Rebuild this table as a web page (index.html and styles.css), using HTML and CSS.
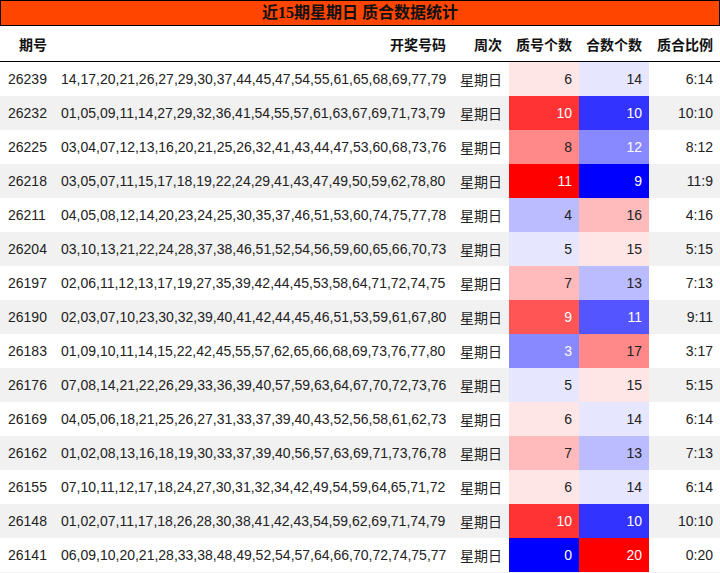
FILE: index.html
```html
<!DOCTYPE html>
<html lang="zh">
<head>
<meta charset="utf-8">
<title>近15期星期日 质合数据统计</title>
<link rel="stylesheet" href="styles.css">
</head>
<body>
<div class="board">
  <div class="title">近15期星期日 质合数据统计</div>
  <div class="row head">
    <div class="c id r">期号</div>
    <div class="c nums r">开奖号码</div>
    <div class="c r">周次</div>
    <div class="c r">质号个数</div>
    <div class="c r">合数个数</div>
    <div class="c r">质合比例</div>
  </div>
  <div class="row">
    <div class="c id">26239</div><div class="c nums">14,17,20,21,26,27,29,30,37,44,45,47,54,55,61,65,68,69,77,79</div><div class="c">星期日</div>
    <div class="c r red1">6</div><div class="c r blue1">14</div><div class="c r">6:14</div>
  </div>
  <div class="row alt">
    <div class="c id">26232</div><div class="c nums">01,05,09,11,14,27,29,32,36,41,54,55,57,61,63,67,69,71,73,79</div><div class="c">星期日</div>
    <div class="c r red5">10</div><div class="c r blue5">10</div><div class="c r">10:10</div>
  </div>
  <div class="row">
    <div class="c id">26225</div><div class="c nums">03,04,07,12,13,16,20,21,25,26,32,41,43,44,47,53,60,68,73,76</div><div class="c">星期日</div>
    <div class="c r red3">8</div><div class="c r blue3">12</div><div class="c r">8:12</div>
  </div>
  <div class="row alt">
    <div class="c id">26218</div><div class="c nums">03,05,07,11,15,17,18,19,22,24,29,41,43,47,49,50,59,62,78,80</div><div class="c">星期日</div>
    <div class="c r red6">11</div><div class="c r blue6">9</div><div class="c r">11:9</div>
  </div>
  <div class="row">
    <div class="c id">26211</div><div class="c nums">04,05,08,12,14,20,23,24,25,30,35,37,46,51,53,60,74,75,77,78</div><div class="c">星期日</div>
    <div class="c r blue2">4</div><div class="c r red2">16</div><div class="c r">4:16</div>
  </div>
  <div class="row alt">
    <div class="c id">26204</div><div class="c nums">03,10,13,21,22,24,28,37,38,46,51,52,54,56,59,60,65,66,70,73</div><div class="c">星期日</div>
    <div class="c r blue1">5</div><div class="c r red1">15</div><div class="c r">5:15</div>
  </div>
  <div class="row">
    <div class="c id">26197</div><div class="c nums">02,06,11,12,13,17,19,27,35,39,42,44,45,53,58,64,71,72,74,75</div><div class="c">星期日</div>
    <div class="c r red2">7</div><div class="c r blue2">13</div><div class="c r">7:13</div>
  </div>
  <div class="row alt">
    <div class="c id">26190</div><div class="c nums">02,03,07,10,23,30,32,39,40,41,42,44,45,46,51,53,59,61,67,80</div><div class="c">星期日</div>
    <div class="c r red4">9</div><div class="c r blue4">11</div><div class="c r">9:11</div>
  </div>
  <div class="row">
    <div class="c id">26183</div><div class="c nums">01,09,10,11,14,15,22,42,45,55,57,62,65,66,68,69,73,76,77,80</div><div class="c">星期日</div>
    <div class="c r blue3">3</div><div class="c r red3">17</div><div class="c r">3:17</div>
  </div>
  <div class="row alt">
    <div class="c id">26176</div><div class="c nums">07,08,14,21,22,26,29,33,36,39,40,57,59,63,64,67,70,72,73,76</div><div class="c">星期日</div>
    <div class="c r blue1">5</div><div class="c r red1">15</div><div class="c r">5:15</div>
  </div>
  <div class="row">
    <div class="c id">26169</div><div class="c nums">04,05,06,18,21,25,26,27,31,33,37,39,40,43,52,56,58,61,62,73</div><div class="c">星期日</div>
    <div class="c r red1">6</div><div class="c r blue1">14</div><div class="c r">6:14</div>
  </div>
  <div class="row alt">
    <div class="c id">26162</div><div class="c nums">01,02,08,13,16,18,19,30,33,37,39,40,56,57,63,69,71,73,76,78</div><div class="c">星期日</div>
    <div class="c r red2">7</div><div class="c r blue2">13</div><div class="c r">7:13</div>
  </div>
  <div class="row">
    <div class="c id">26155</div><div class="c nums">07,10,11,12,17,18,24,27,30,31,32,34,42,49,54,59,64,65,71,72</div><div class="c">星期日</div>
    <div class="c r red1">6</div><div class="c r blue1">14</div><div class="c r">6:14</div>
  </div>
  <div class="row alt">
    <div class="c id">26148</div><div class="c nums">01,02,07,11,17,18,26,28,30,38,41,42,43,54,59,62,69,71,74,79</div><div class="c">星期日</div>
    <div class="c r red5">10</div><div class="c r blue5">10</div><div class="c r">10:10</div>
  </div>
  <div class="row last">
    <div class="c id">26141</div><div class="c nums">06,09,10,20,21,28,33,38,48,49,52,54,57,64,66,70,72,74,75,77</div><div class="c">星期日</div>
    <div class="c r blue6">0</div><div class="c r red6">20</div><div class="c r">0:20</div>
  </div>
</div>
</body>
</html>
```

FILE: styles.css
```css
html, body {
  margin: 0;
  padding: 0;
  background: #ffffff;
}

.board {
  width: 720px;
  font-family: "Liberation Sans", "Noto Sans CJK SC", sans-serif;
  font-size: 14px;
  color: #222222;
}

.title {
  height: 24px;
  line-height: 24px;
  border: 1px solid #000000;
  background: #ff4500;
  color: #111111;
  text-align: center;
  font-family: "Liberation Serif", "Noto Sans CJK SC", serif;
  font-weight: bold;
  font-size: 16px;
}

.row {
  display: grid;
  grid-template-columns: 55px 398px 56px 70px 70px 71px;
  height: 34px;
  background: #ffffff;
}

.row.alt {
  background: #f1f1f1;
}

.row.last {
  border-bottom: 1px solid #f1f1f1;
}

.row.head {
  height: 35px;
  border-bottom: 1px solid #000000;
  font-weight: bold;
  color: #111111;
}

.c {
  display: flex;
  align-items: center;
  padding: 0 7px;
  white-space: nowrap;
  overflow: hidden;
}

.c.id {
  padding: 0 8px;
}

.c.nums {
  padding: 0 7px 0 6px;
}

.c.r {
  justify-content: flex-end;
}

.red1 { background: #ffe6e6; }
.red2 { background: #ffbbbb; }
.red3 { background: #ff8888; }
.red4 { background: #ff5555; color: #ffffff; }
.red5 { background: #ff3333; color: #ffffff; }
.red6 { background: #ff0000; color: #ffffff; }

.blue1 { background: #e6e6ff; }
.blue2 { background: #bbbbff; }
.blue3 { background: #8888ff; color: #ffffff; }
.blue4 { background: #5555ff; color: #ffffff; }
.blue5 { background: #3333ff; color: #ffffff; }
.blue6 { background: #0000ff; color: #ffffff; }
```
